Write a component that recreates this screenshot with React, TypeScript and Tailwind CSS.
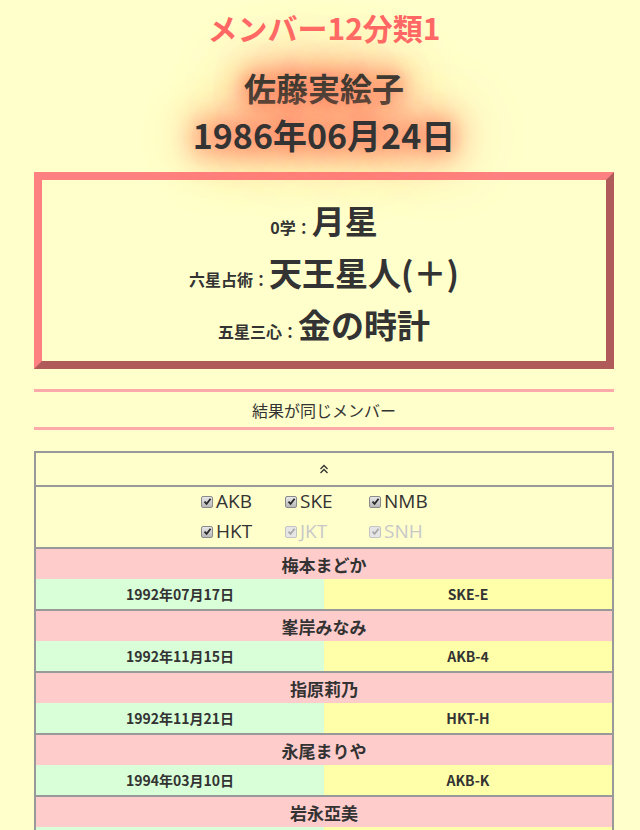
import React from 'react';

const members = [
    { name: "梅本まどか", birth: "1992年07月17日", team: "SKE-E" },
    { name: "峯岸みなみ", birth: "1992年11月15日", team: "AKB-4" },
    { name: "指原莉乃", birth: "1992年11月21日", team: "HKT-H" },
    { name: "永尾まりや", birth: "1994年03月10日", team: "AKB-K" },
    { name: "岩永亞美", birth: "1994年05月02日", team: "SKE-S" },
];

const groups = [
    { label: "AKB", disabled: false },
    { label: "SKE", disabled: false },
    { label: "NMB", disabled: false },
    { label: "HKT", disabled: false },
    { label: "JKT", disabled: true },
    { label: "SNH", disabled: true },
];

const results = [
    { label: "0学：", value: "月星" },
    { label: "六星占術：", value: "天王星人(＋)" },
    { label: "五星三心：", value: "金の時計" },
];

function CheckBox({ disabled }: { disabled: boolean }) {
    return (
        <span
            className={`inline-flex w-[12px] h-[12px] rounded-[2px] border items-center justify-center ${disabled
                ? "border-[#c4c4c4] bg-[#e6e6e6]"
                : "border-[#8a8a8a] bg-gradient-to-b from-[#e8e8e8] to-[#b8b8b8]"
                }`}
        >
            <svg width="9" height="9" viewBox="0 0 9 9">
                <path
                    d="M1.5 4.6 L3.6 6.8 L7.6 1.8"
                    fill="none"
                    stroke={disabled ? "#a8a8a8" : "#2a2a2a"}
                    strokeWidth="1.8"
                />
            </svg>
        </span>
    );
}

export default function App() {
    return (
        <div
            className="min-h-screen bg-[#ffffcc] text-[#333333] pb-10"
            style={{ fontFamily: '"Noto Sans CJK JP", "Noto Sans", sans-serif' }}
        >
            <div className="w-[580px] ml-[34px]">
                {/* header */}
                <h1 className="h-[54px] flex items-center justify-center text-[30px] font-bold leading-none text-[#ff6666]">
                    メンバー12分類1
                </h1>
                <div className="mt-[9px] pb-[2px] text-center font-bold [text-shadow:0_0_20px_#ff7a5c,0_0_30px_#ff7a5c,0_0_45px_#ff8a6a,0_0_70px_#ff9a7c,0_0_90px_#ffb090]">
                    <div className="h-[48px] flex items-center justify-center text-[32px] leading-none">佐藤実絵子</div>
                    <div className="h-[48px] flex items-center justify-center text-[34px] leading-none">1986年06月24日</div>
                </div>

                {/* result box */}
                <div className="mt-[11px] border-[8px] border-t-[#ff8080] border-l-[#ff8080] border-r-[#b05a5a] border-b-[#b05a5a] pt-[14px] pb-[11px] font-bold">
                    {results.map((r) => (
                        <div key={r.label} className="h-[52px] flex items-center justify-center">
                            <div className="leading-none whitespace-nowrap">
                                <span className="text-[16px]">{r.label}</span>
                                <span className="text-[33px]">{r.value}</span>
                            </div>
                        </div>
                    ))}
                </div>

                {/* same result heading */}
                <div className="mt-[20px] border-y-[3px] border-[#ffaaaa] h-[41px] flex items-center justify-center text-[16px]">
                    結果が同じメンバー
                </div>

                {/* member table */}
                <div className="mt-[21px] border-2 border-[#999999]">
                    <div className="h-[34px] flex items-center justify-center border-b-2 border-[#999999]">
                        <svg width="10" height="10" viewBox="0 0 10 10">
                            <path d="M1.5 5 L5 1.5 L8.5 5 M1.5 9 L5 5.5 L8.5 9" fill="none" stroke="#333" strokeWidth="1.3" />
                        </svg>
                    </div>
                    <div className="h-[62px] border-b-2 border-[#999999] flex justify-center">
                        <div className="grid grid-cols-[84px_84px_84px] pl-[6px]">
                            {groups.map((g) => (
                                <label
                                    key={g.label}
                                    className={`h-[29px] flex items-center gap-[3px] text-[19px] ${g.disabled ? "text-[#c8c8c8]" : "text-[#333333]"}`}
                                    style={{ fontFamily: '"Open Sans", "Noto Sans CJK JP", sans-serif' }}
                                >
                                    <CheckBox disabled={g.disabled} />
                                    <span className="leading-none">{g.label}</span>
                                </label>
                            ))}
                        </div>
                    </div>
                    {members.map((m, i) => (
                        <div key={i} className="border-b-2 border-[#999999] last:border-b-0">
                            <div className="h-[30px] bg-[#ffcccc] flex items-center justify-center text-[17px] font-bold leading-none">
                                {m.name}
                            </div>
                            <div className="grid grid-cols-2 h-[30px] text-[14px] font-bold leading-none">
                                <div className="bg-[#d9ffd9] flex items-center justify-center">{m.birth}</div>
                                <div className="bg-[#ffffaa] flex items-center justify-center">{m.team}</div>
                            </div>
                        </div>
                    ))}
                </div>
            </div>
        </div>
    );
}
